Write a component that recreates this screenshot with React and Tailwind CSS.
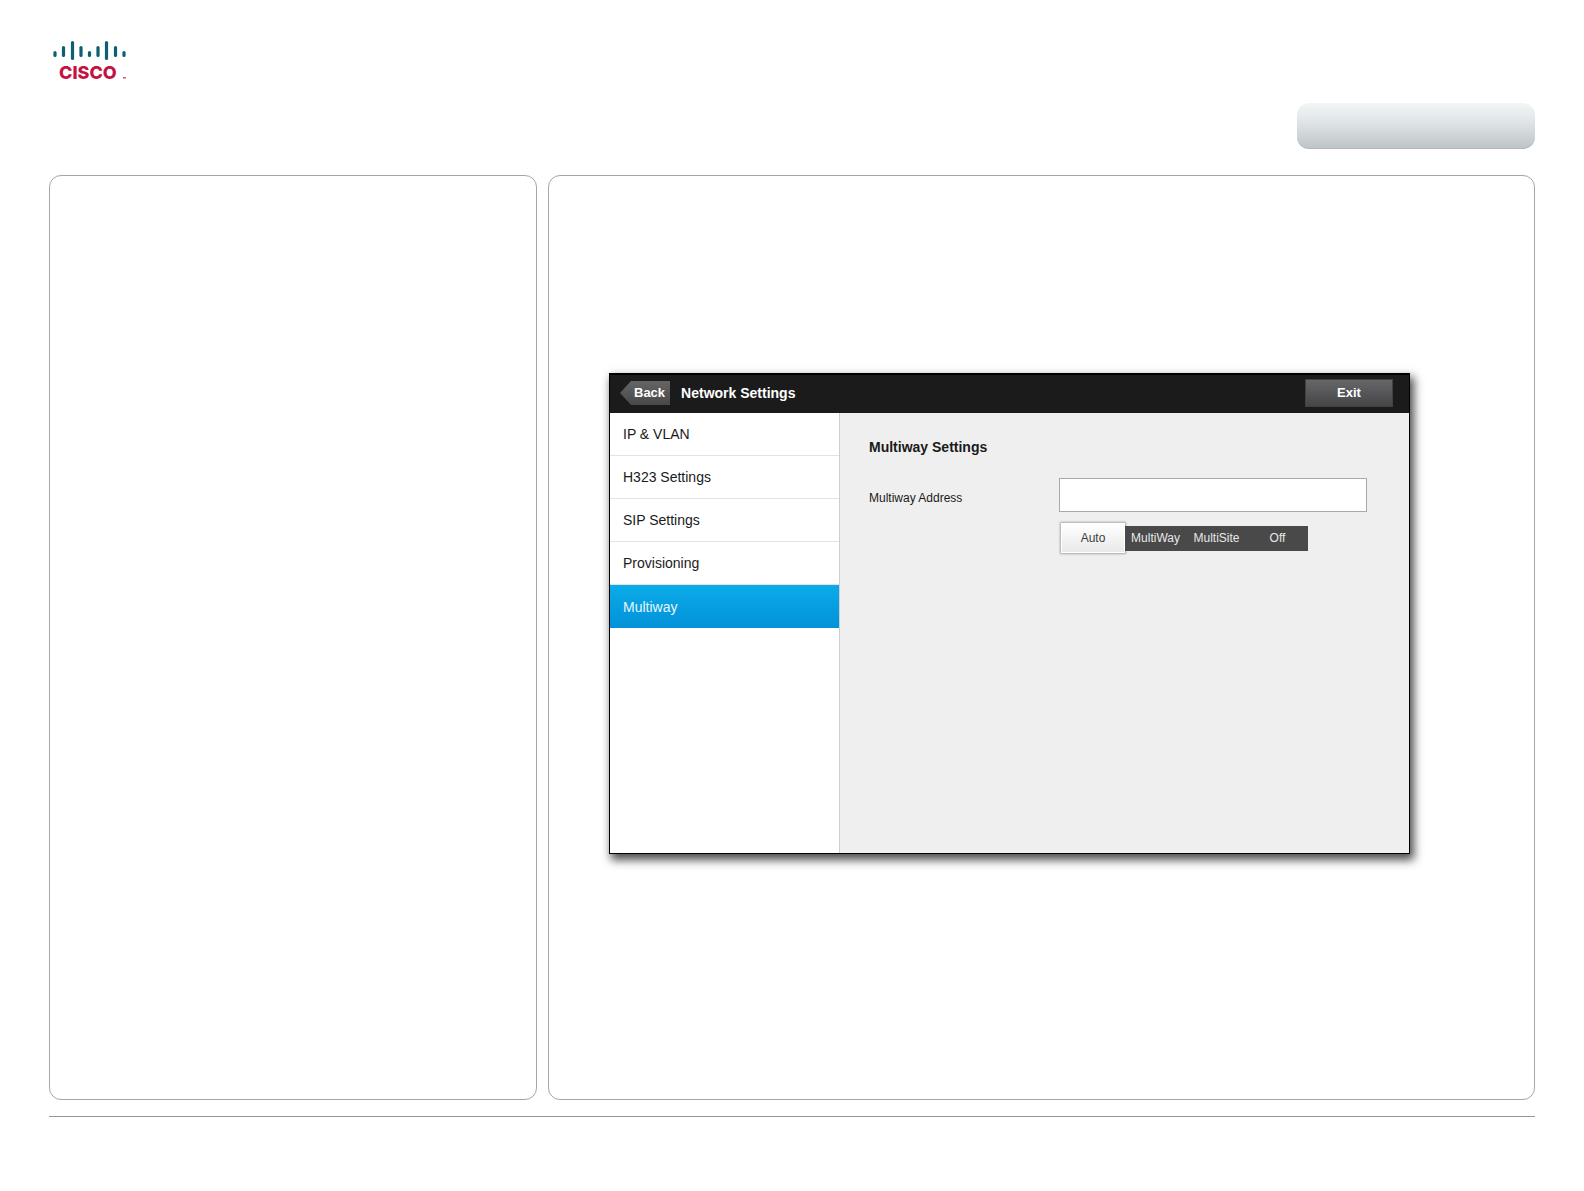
import React, { useState } from "react";
import clsx from "clsx";

const menuItems = [
  "IP & VLAN",
  "H323 Settings",
  "SIP Settings",
  "Provisioning",
  "Multiway",
];

const modes = ["Auto", "MultiWay", "MultiSite", "Off"];

// x center, top and bottom of every bar in the logo
const bars = [
  [2, 11, 17],
  [10.5, 6, 17],
  [19.5, 1, 20],
  [28, 6, 17],
  [36.5, 11, 17],
  [45, 6, 17],
  [53.5, 1, 20],
  [62.5, 6, 17],
  [71, 11, 17],
];

const Logo = () => {
  return (
    <a href="#" className="block w-[76px]">
      <svg viewBox="0 0 76 44" className="block w-full" role="img">
        {bars.map(([x, top, bottom]) => (
          <line
            key={x}
            x1={x}
            x2={x}
            y1={top + 1.6}
            y2={bottom - 1.6}
            stroke="#0f5f74"
            strokeWidth="3.2"
            strokeLinecap="round"
          />
        ))}
        <text
          x="6"
          y="39"
          fill="#c4123f"
          fontSize="18"
          fontWeight="800"
          fontFamily="Inter, sans-serif"
        >
          CISCO
        </text>
        <rect x="70" y="37" width="3" height="1.5" fill="#d0607c" />
      </svg>
    </a>
  );
};

const TopBar = () => {
  return (
    <div className="flex h-[39px] items-center border-t border-black bg-[#1b1b1b] pr-4 pb-0.5 pl-[10px] font-bold text-white">
      <button className="flex h-6 items-center">
        <svg viewBox="0 0 11 24" className="h-6 w-[11px]">
          <defs>
            <linearGradient id="arrow" x1="0" y1="0" x2="0" y2="1">
              <stop offset="0" stopColor="#656565" />
              <stop offset="1" stopColor="#484848" />
            </linearGradient>
          </defs>
          <path d="M11 0V24L0 12Z" fill="url(#arrow)" />
        </svg>
        <span className="flex h-6 items-center bg-linear-to-b from-[#656565] to-[#484848] pr-[5px] pl-[3px] text-[13px]">
          Back
        </span>
      </button>
      <h1 className="ml-[11px] grow text-sm">Network Settings</h1>
      <button className="h-7 w-[88px] border border-[#414141] bg-linear-to-b from-[#66676a] to-[#464648] text-[13px]">
        Exit
      </button>
    </div>
  );
};

const SideMenu = ({ active, onSelect }) => {
  return (
    <nav className="flex w-[230px] shrink-0 flex-col border-r border-[#cfcfcf] bg-white">
      {menuItems.map((item) => (
        <button
          key={item}
          onClick={() => onSelect(item)}
          className={clsx(
            "h-[43px] px-[13px] text-left text-sm",
            item === active
              ? "bg-linear-to-b from-[#0cabe9] to-[#0392d8] text-[#e6f6fd]"
              : "border-b border-[#e3e3e3] text-[#1a1a1a]"
          )}
        >
          {item}
        </button>
      ))}
    </nav>
  );
};

const ModeSwitch = () => {
  const [mode, setMode] = useState("Auto");
  return (
    <fieldset className="ml-0.5 flex items-center text-xs">
      {modes.map((item) => (
        <label
          key={item}
          className={clsx(
            "relative flex items-center justify-center",
            item === mode
              ? "h-[30px] w-16 border border-white bg-linear-to-b from-white to-[#e9e9e9] text-[#3c3c3c] shadow-[0_0_2px_1px_#0000004d]"
              : "h-[25px] w-[61px] bg-[#494949] text-[#e8e8e8]"
          )}
        >
          <input
            type="radio"
            name="mode"
            value={item}
            checked={item === mode}
            onChange={() => setMode(item)}
            className="sr-only"
          />
          {item}
        </label>
      ))}
    </fieldset>
  );
};

const SettingsWindow = () => {
  const [active, setActive] = useState("Multiway");
  const [address, setAddress] = useState("");
  return (
    <div className="flex min-h-[481px] w-full max-w-[801px] flex-col border border-black bg-[#efefef] shadow-[3px_5px_9px_1px_#000000b3]">
      <TopBar />
      <div className="flex grow">
        <SideMenu active={active} onSelect={setActive} />
        <main className="grow pt-6 pr-[42px] pl-[29px] text-[#1a1a1a]">
          <h2 className="text-sm font-bold">Multiway Settings</h2>
          <div className="mt-[21px] flex">
            <label htmlFor="address" className="w-[190px] pt-3 text-xs">
              Multiway Address
            </label>
            <div className="grow">
              <input
                id="address"
                type="text"
                value={address}
                onChange={(e) => setAddress(e.target.value)}
                className="mb-[11px] block h-[34px] w-full border border-[#a9a9a9] bg-white px-2 text-sm"
              />
              <ModeSwitch />
            </div>
          </div>
        </main>
      </div>
    </div>
  );
};

const App = () => {
  return (
    <div
      className="min-h-screen bg-white px-[49px] pt-10"
      style={{ fontFamily: '"Liberation Sans", Arial, sans-serif' }}
    >
      <header className="px-1">
        <Logo />
      </header>
      <div className="mt-[19px] flex justify-end">
        <div className="h-[46px] w-[238px] rounded-xl border-b border-[#b0b8bb] bg-linear-to-b from-[#f3f6f7] via-[#dbe1e3] to-[#bdc5c8]" />
      </div>
      <div className="mt-[26px] grid min-h-[925px] grid-cols-[488fr_987fr] gap-[11px]">
        <section className="rounded-xl border border-[#a6a6a6]" />
        <section className="rounded-xl border border-[#a6a6a6] pt-[197px] pr-10 pl-[60px]">
          <SettingsWindow />
        </section>
      </div>
      <hr className="mt-4 border-[#969696]" />
    </div>
  );
};

export default App;
